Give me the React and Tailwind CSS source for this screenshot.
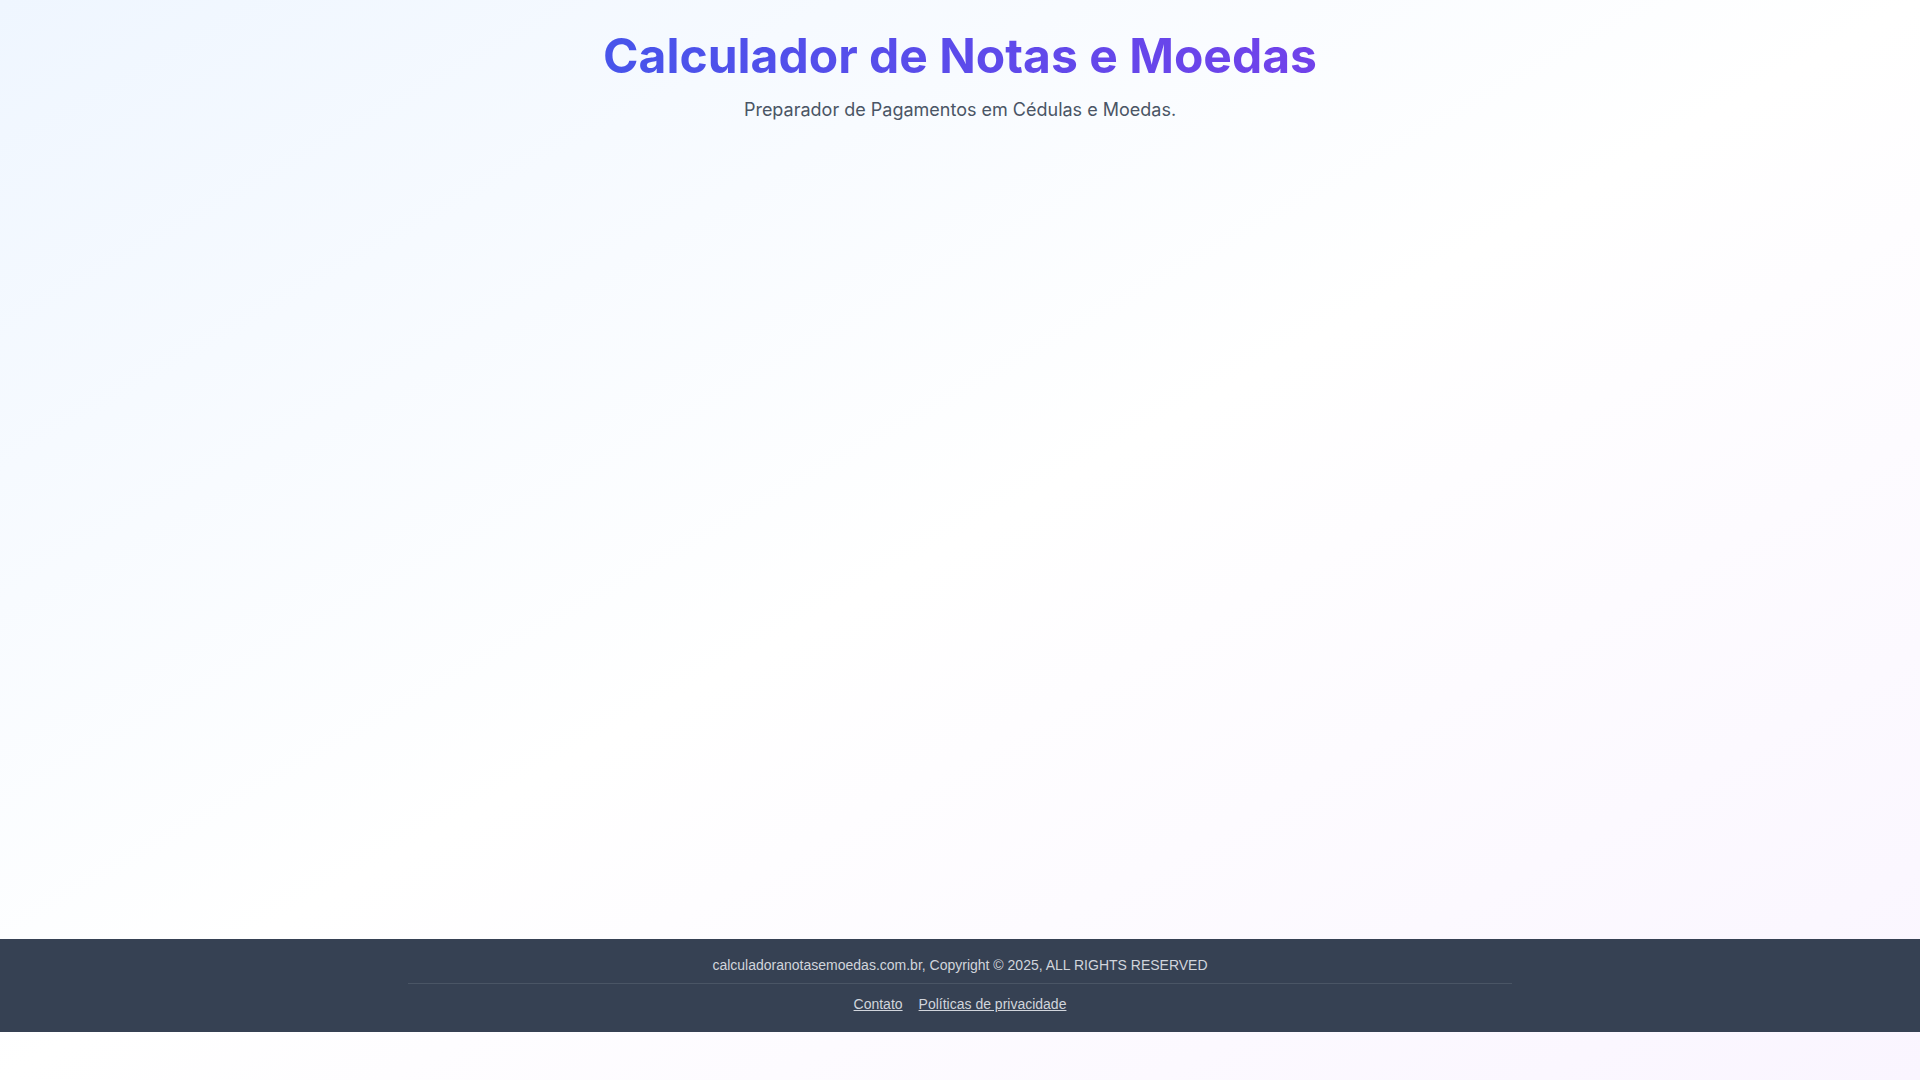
export default function App() {
  return (
    <div className="flex min-h-screen flex-col bg-linear-to-br/srgb from-[#eff6ff] via-white to-[#faf5ff] pb-12 font-['Inter',sans-serif]">
      <header className="px-4 pt-8 text-center">
        <h1 className="bg-linear-to-r/srgb from-[#2563eb] to-[#9333ea] bg-clip-text text-5xl leading-none font-bold text-transparent">
          Calculador de Notas e Moedas
        </h1>
        <p className="mt-4 text-lg text-gray-600">
          Preparador de Pagamentos em Cédulas e Moedas.
        </p>
      </header>

      <main className="flex-1" />

      <footer className="bg-gray-700 pt-4 pb-[18px] font-['Liberation_Sans',Arial,sans-serif] text-sm text-gray-300">
        <div className="mx-auto max-w-6xl px-6">
          <p className="text-center">
            calculadoranotasemoedas.com.br, Copyright © 2025, ALL RIGHTS RESERVED
          </p>
          <div className="mt-2 flex justify-center gap-4 border-t border-gray-600 pt-[10px]">
            <a href="#" className="underline hover:text-white">
              Contato
            </a>
            <a href="#" className="underline hover:text-white">
              Políticas de privacidade
            </a>
          </div>
        </div>
      </footer>
    </div>
  );
}
